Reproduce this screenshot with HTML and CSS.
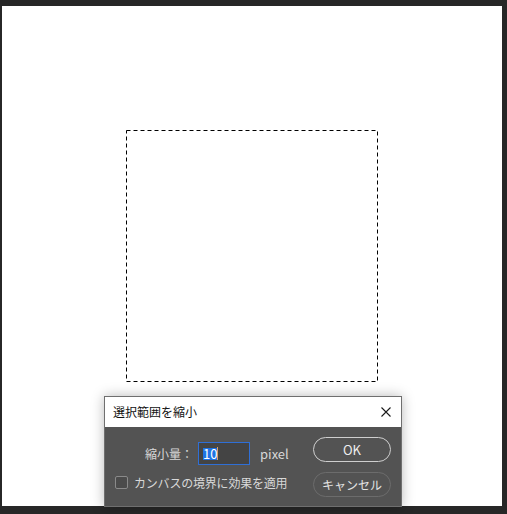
FILE: index.html
```html
<!DOCTYPE html>
<html lang="ja">
<head>
<meta charset="utf-8">
<title>選択範囲を縮小</title>
<link rel="stylesheet" href="styles.css">
</head>
<body>
<div class="workspace">
  <div class="canvas">
    <svg class="selection" width="252" height="252" viewBox="0 0 252 252">
      <rect x="0.5" y="0.5" width="251" height="251" fill="none" stroke="#000" stroke-width="1" stroke-dasharray="4 3"/>
    </svg>
    <div class="dialog">
      <div class="titlebar">
        <span class="title">選択範囲を縮小</span>
        <svg class="close" width="10" height="10" viewBox="0 0 10 10">
          <path d="M0.5 0.5 L9.5 9.5 M9.5 0.5 L0.5 9.5" stroke="#1a1a1a" stroke-width="1.1" fill="none"/>
        </svg>
      </div>
      <div class="body">
        <div class="fields">
          <div class="row amount">
            <span class="label">縮小量：</span>
            <div class="input"><span class="sel">10</span><span class="caret"></span></div>
            <span class="unit">pixel</span>
          </div>
          <div class="row check">
            <span class="box"></span>
            <span class="label">カンバスの境界に効果を適用</span>
          </div>
        </div>
        <div class="buttons">
          <div class="btn ok">OK</div>
          <div class="btn cancel">キャンセル</div>
        </div>
      </div>
    </div>
  </div>
</div>
</body>
</html>
```

FILE: styles.css
```css
html, body {
  margin: 0;
  padding: 0;
  background: #272727;
}
body {
  width: 507px;
  height: 514px;
  overflow: hidden;
  font-family: "Noto Sans CJK JP", "Noto Sans", sans-serif;
}
.workspace {
  padding: 6px 0 0 2px;
}
.canvas {
  position: relative;
  width: 500px;
  height: 500px;
  background: #fff;
}
.selection {
  position: absolute;
  left: 124px;
  top: 124px;
  display: block;
}
.dialog {
  position: absolute;
  left: 102px;
  top: 390px;
  width: 296px;
  border: 1px solid #6f6f6f;
  background: #535353;
  box-shadow: 0 0 12px rgba(0, 0, 0, 0.28);
  display: flex;
  flex-direction: column;
}
.titlebar {
  height: 30px;
  background: #fff;
  display: flex;
  align-items: center;
  justify-content: space-between;
  padding: 0 10px 0 8px;
}
.title {
  font-size: 12px;
  color: #111;
  line-height: 1;
}
.close {
  display: block;
}
.body {
  height: 79px;
  display: flex;
  box-sizing: border-box;
  padding: 10px 10px 9px 0;
}
.fields {
  flex: 1;
  display: flex;
  flex-direction: column;
  padding-top: 5px;
  gap: 10px;
}
.row {
  display: flex;
  align-items: center;
  color: #d8d8d8;
  font-size: 12px;
}
.amount {
  padding-left: 40px;
  height: 23px;
}
.amount .label {
  width: 53px;
}
.input {
  width: 52px;
  height: 23px;
  box-sizing: border-box;
  border: 1px solid #2f6fd6;
  background: #444;
  display: flex;
  align-items: center;
  padding-left: 4px;
}
.sel {
  background: #1f73e3;
  color: #fff;
  font-size: 13px;
  line-height: 12px;
  height: 12px;
  padding: 0 0 0 0;
}
.caret {
  width: 1px;
  height: 13px;
  background: #d9a06a;
}
.unit {
  margin-left: 10px;
  font-size: 13px;
}
.check {
  padding-left: 10px;
  height: 14px;
}
.box {
  width: 13px;
  height: 13px;
  box-sizing: border-box;
  border: 1.5px solid #8a8a8a;
  border-radius: 2px;
  background: #4b4b4b;
  margin-right: 6px;
}
.check .label {
  letter-spacing: -0.2px;
}
.buttons {
  display: flex;
  flex-direction: column;
  gap: 10px;
}
.btn {
  width: 78px;
  height: 25px;
  box-sizing: border-box;
  border-radius: 13px;
  display: flex;
  align-items: center;
  justify-content: center;
  color: #eee;
}
.ok {
  border: 1.5px solid #cfcfcf;
  font-size: 13px;
}
.cancel {
  border: 1.5px solid #6c6c6c;
  font-size: 12px;
  color: #e4e4e4;
}
```
